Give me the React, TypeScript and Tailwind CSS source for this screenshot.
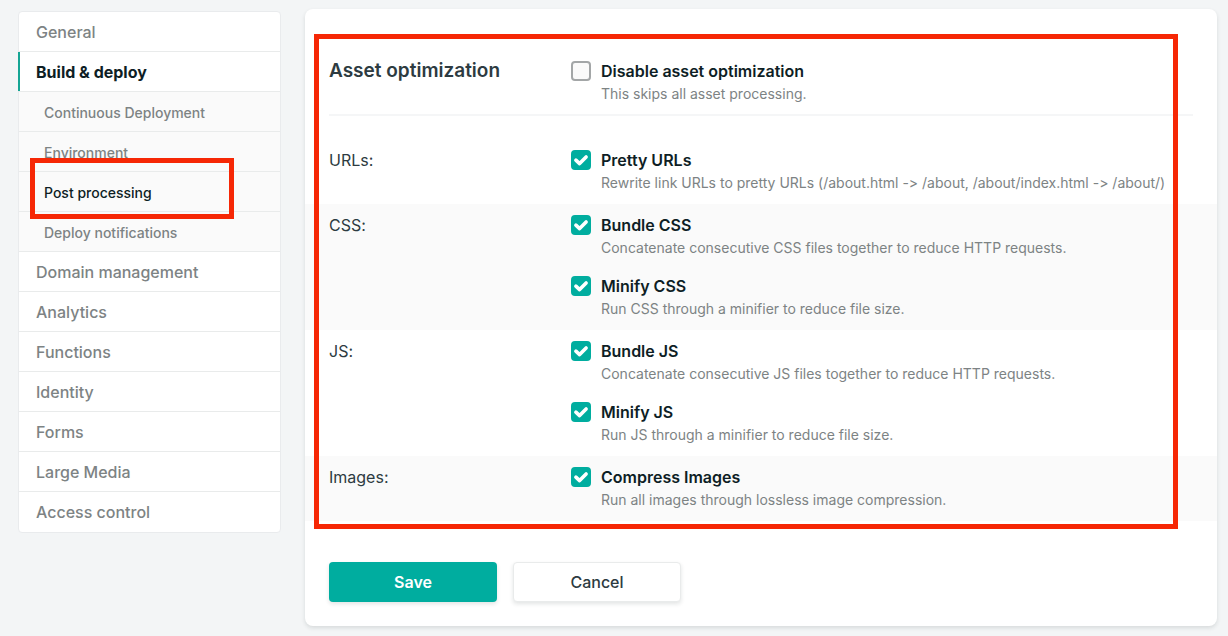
import { useState } from "react";

type Option = { id: string; title: string; description: string };
type Group = { label: string; options: Option[] };

const groups: Group[] = [
  {
    label: "URLs:",
    options: [
      {
        id: "pretty-urls",
        title: "Pretty URLs",
        description:
          "Rewrite link URLs to pretty URLs (/about.html -> /about, /about/index.html -> /about/)",
      },
    ],
  },
  {
    label: "CSS:",
    options: [
      {
        id: "bundle-css",
        title: "Bundle CSS",
        description: "Concatenate consecutive CSS files together to reduce HTTP requests.",
      },
      {
        id: "minify-css",
        title: "Minify CSS",
        description: "Run CSS through a minifier to reduce file size.",
      },
    ],
  },
  {
    label: "JS:",
    options: [
      {
        id: "bundle-js",
        title: "Bundle JS",
        description: "Concatenate consecutive JS files together to reduce HTTP requests.",
      },
      {
        id: "minify-js",
        title: "Minify JS",
        description: "Run JS through a minifier to reduce file size.",
      },
    ],
  },
  {
    label: "Images:",
    options: [
      {
        id: "compress-images",
        title: "Compress Images",
        description: "Run all images through lossless image compression.",
      },
    ],
  },
];

const buildLinks = [
  "Continuous Deployment",
  "Environment",
  "Post processing",
  "Deploy notifications",
];

const siteLinks = [
  "Domain management",
  "Analytics",
  "Functions",
  "Identity",
  "Forms",
  "Large Media",
  "Access control",
];

function Sidebar() {
  return (
    <nav
      aria-label="Settings"
      className="mt-0.5 w-[263px] shrink-0 rounded border border-[#e9ebed] bg-white pb-px font-medium text-[#7d8384]"
    >
      <ul>
        <li>
          <a href="#general" className="flex h-[39px] items-center px-[17px]">
            General
          </a>
        </li>
        <li className="border-t border-[#e9ebeb]">
          <a
            href="#build"
            className="-ml-px flex h-[39px] items-center border-l-2 border-[#15a594] px-4 font-bold text-[#0e1e25]"
          >
            Build &amp; deploy
          </a>
          <ul className="bg-[#fafafa] text-sm">
            {buildLinks.map((name) => (
              <li key={name} className="relative border-t border-[#e9ebeb]">
                <a
                  href="#build"
                  aria-current={name === "Post processing" ? "page" : undefined}
                  className="flex h-[39px] items-center px-[25px] pt-0.5 aria-[current=page]:text-[#0e1e25]"
                >
                  {name}
                </a>
                {name === "Post processing" && (
                  <div className="pointer-events-none absolute -top-3.5 left-[11px] z-10 h-[61px] w-[204px] border-5 border-[#f62705]" />
                )}
              </li>
            ))}
          </ul>
        </li>
        {siteLinks.map((name) => (
          <li key={name} className="border-t border-[#e9ebeb]">
            <a href="#site" className="flex h-[39px] items-center px-[17px]">
              {name}
            </a>
          </li>
        ))}
      </ul>
    </nav>
  );
}

function CheckOption({
  option,
  checked,
  onToggle,
}: {
  option: Option;
  checked: boolean;
  onToggle: () => void;
}) {
  return (
    <div className="flex gap-2.5">
      <span className="mt-0.5 grid size-5 shrink-0">
        <input
          id={option.id}
          type="checkbox"
          checked={checked}
          onChange={onToggle}
          aria-describedby={`${option.id}-description`}
          className="peer col-start-1 row-start-1 size-5 appearance-none rounded border-2 border-[#a3a6a7] bg-[#fafafa] checked:border-[#00ad9f] checked:bg-[#00ad9f]"
        />
        <svg
          viewBox="0 0 20 20"
          aria-hidden="true"
          className="pointer-events-none invisible col-start-1 row-start-1 size-5 peer-checked:visible"
        >
          <path
            d="M4.9 10.2 L8.6 13.6 L15.1 7"
            fill="none"
            stroke="white"
            strokeWidth="3.6"
            strokeLinecap="round"
            strokeLinejoin="round"
          />
        </svg>
      </span>
      <div>
        <label htmlFor={option.id} className="block leading-6 font-semibold text-[#0e1e25]">
          {option.title}
        </label>
        <p id={`${option.id}-description`} className="text-sm leading-[22px] text-[#7d8384]">
          {option.description}
        </p>
      </div>
    </div>
  );
}

export default function App() {
  const [values, setValues] = useState<Record<string, boolean>>({
    "disable-optimization": false,
    "pretty-urls": true,
    "bundle-css": true,
    "minify-css": true,
    "bundle-js": true,
    "minify-js": true,
    "compress-images": true,
  });
  const toggle = (id: string) => setValues((v) => ({ ...v, [id]: !v[id] }));

  return (
    <div className="flex min-h-screen items-start gap-6 bg-[#f3f5f6] pt-[9px] pr-[11px] pb-2.5 pl-[18px] font-['Inter',sans-serif] text-base [font-variant-ligatures:none]">
      <Sidebar />
      <main className="relative min-w-0 flex-1 rounded-lg bg-white pt-[50px] pb-6 shadow-[0_2px_4px_0_rgba(14,30,37,0.12)]">
        <div className="pointer-events-none absolute top-[25px] right-[39px] left-[9px] z-10 h-[495px] border-5 border-[#f62705]" />
        <form onSubmit={(e) => e.preventDefault()}>
          <div className="mx-6 mb-[23px] grid grid-cols-[242px_1fr] border-b-2 border-[#f5f6f7] pb-[9px]">
            <h2 className="text-[19px] leading-6 font-semibold text-[#2d3b41]">
              Asset optimization
            </h2>
            <CheckOption
              option={{
                id: "disable-optimization",
                title: "Disable asset optimization",
                description: "This skips all asset processing.",
              }}
              checked={values["disable-optimization"]}
              onToggle={() => toggle("disable-optimization")}
            />
          </div>
          {groups.map((group) => (
            <div
              key={group.label}
              role="group"
              aria-label={group.label}
              className="grid grid-cols-[242px_1fr] px-6 pt-[9px] pb-2.5 odd:bg-[#fafafa]"
            >
              <span className="leading-6 text-[#2d3b41]">{group.label}</span>
              <div className="flex flex-col gap-[15px]">
                {group.options.map((option) => (
                  <CheckOption
                    key={option.id}
                    option={option}
                    checked={values[option.id]}
                    onToggle={() => toggle(option.id)}
                  />
                ))}
              </div>
            </div>
          ))}
          <div className="mt-[41px] flex gap-4 px-6">
            <button
              type="submit"
              className="h-10 w-[168px] rounded bg-[#00ad9f] font-semibold text-white shadow-[0_2px_4px_0_rgba(14,30,37,0.12)]"
            >
              Save
            </button>
            <button
              type="button"
              className="h-10 w-[168px] rounded border border-[#e9ebeb] bg-white font-medium text-[#2d3b41] shadow-[0_2px_4px_0_rgba(14,30,37,0.12)]"
            >
              Cancel
            </button>
          </div>
        </form>
      </main>
    </div>
  );
}
